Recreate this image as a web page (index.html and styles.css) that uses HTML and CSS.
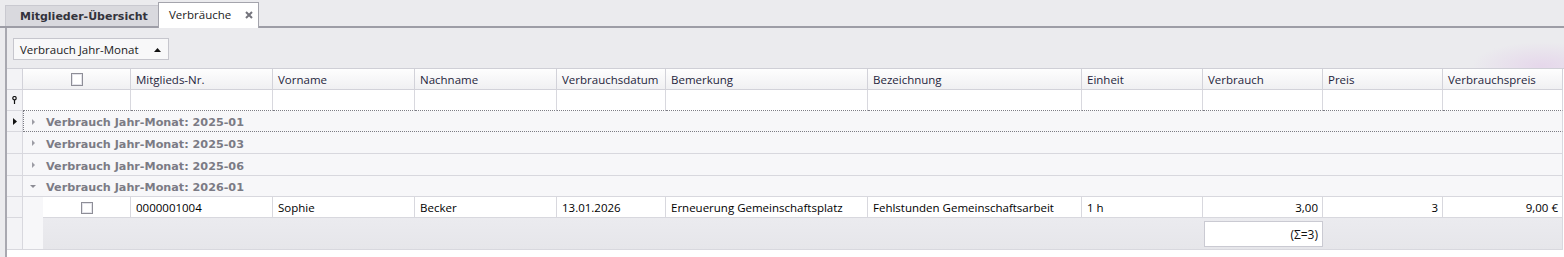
FILE: index.html
```html
<!DOCTYPE html>
<html lang="de">
<head>
  <meta charset="UTF-8" />
  <title>Verbräuche</title>
  <link rel="stylesheet" href="styles.css">
</head>
<body>
  <div class="tabs">
    <div class="tab">Mitglieder-Übersicht</div>
    <div class="tab active">
      Verbräuche
      <svg class="tab-close" width="8" height="8" viewBox="0 0 8 8"><path d="M1 1L7 7M7 1L1 7" stroke="#74747c" stroke-width="2"/></svg>
    </div>
  </div>

  <div class="panel">
    <div class="group-panel">
      <div class="group-btn">
        Verbrauch Jahr-Monat
        <svg width="7" height="4" viewBox="0 0 7 4"><path d="M0 4L3.5 0L7 4Z" fill="#111"/></svg>
      </div>
    </div>

    <div class="grid">
      <div class="row header">
        <div class="cell ind"></div>
        <div class="cell span-check center"><span class="check"></span></div>
        <div class="cell">Mitglieds-Nr.</div>
        <div class="cell">Vorname</div>
        <div class="cell">Nachname</div>
        <div class="cell">Verbrauchsdatum</div>
        <div class="cell">Bemerkung</div>
        <div class="cell">Bezeichnung</div>
        <div class="cell">Einheit</div>
        <div class="cell">Verbrauch</div>
        <div class="cell">Preis</div>
        <div class="cell">Verbrauchspreis</div>
      </div>

      <div class="row filter">
        <div class="cell ind">
          <svg width="5" height="8" viewBox="0 0 5 8"><circle cx="2.5" cy="2.2" r="1.7" fill="none" stroke="#111" stroke-width="1.2"/><path d="M2.5 4V8" stroke="#111" stroke-width="1.2"/></svg>
        </div>
        <div class="cell span-check"></div>
        <div class="cell"></div>
        <div class="cell"></div>
        <div class="cell"></div>
        <div class="cell"></div>
        <div class="cell"></div>
        <div class="cell"></div>
        <div class="cell"></div>
        <div class="cell"></div>
        <div class="cell"></div>
        <div class="cell"></div>
      </div>

      <div class="row group-row">
        <div class="cell ind">
          <svg width="4" height="7" viewBox="0 0 4 7"><path d="M0 0L4 3.5L0 7Z" fill="#111"/></svg>
        </div>
        <div class="cell group focused">
          <svg class="expander" width="3" height="6" viewBox="0 0 3 6"><path d="M0 0L3 3L0 6Z" fill="#9c9ca4"/></svg>
          Verbrauch Jahr-Monat: 2025-01
        </div>
      </div>

      <div class="row group-row tall">
        <div class="cell ind"></div>
        <div class="cell group">
          <svg class="expander" width="3" height="6" viewBox="0 0 3 6"><path d="M0 0L3 3L0 6Z" fill="#9c9ca4"/></svg>
          Verbrauch Jahr-Monat: 2025-03
        </div>
      </div>

      <div class="row group-row tall">
        <div class="cell ind"></div>
        <div class="cell group">
          <svg class="expander" width="3" height="6" viewBox="0 0 3 6"><path d="M0 0L3 3L0 6Z" fill="#9c9ca4"/></svg>
          Verbrauch Jahr-Monat: 2025-06
        </div>
      </div>

      <div class="row group-row">
        <div class="cell ind"></div>
        <div class="cell group">
          <svg class="expander open" width="6" height="3" viewBox="0 0 6 3"><path d="M0 0L6 0L3 3Z" fill="#8c8c94"/></svg>
          Verbrauch Jahr-Monat: 2026-01
        </div>
      </div>

      <div class="row data">
        <div class="cell ind"></div>
        <div class="cell indent"></div>
        <div class="cell center"><span class="check"></span></div>
        <div class="cell">0000001004</div>
        <div class="cell">Sophie</div>
        <div class="cell">Becker</div>
        <div class="cell">13.01.2026</div>
        <div class="cell">Erneuerung Gemeinschaftsplatz</div>
        <div class="cell">Fehlstunden Gemeinschaftsarbeit</div>
        <div class="cell">1 h</div>
        <div class="cell num">3,00</div>
        <div class="cell num">3</div>
        <div class="cell num">9,00 €</div>
      </div>

      <div class="row footer">
        <div class="cell ind"></div>
        <div class="cell indent"></div>
        <div class="cell foot foot-left"></div>
        <div class="cell foot"><div class="summary">(Σ=3)</div></div>
        <div class="cell foot foot-right"></div>
      </div>
    </div>
  </div>
</body>
</html>
```

FILE: styles.css
```css
:root {
  --panel-bg: #ebebee;
  --line: #d8d8de;
  --group-bg: #f7f7f9;
  --ind-bg: #f3f3f6;
  --grid-font: "Open Sans", "Liberation Sans", sans-serif;
  --bold-font: "DejaVu Sans", "Liberation Sans", sans-serif;
}

* {
  margin: 0;
  padding: 0;
  box-sizing: border-box;
}

body {
  width: 1564px;
  height: 257px;
  overflow: hidden;
  background: var(--panel-bg);
  font-family: var(--grid-font);
  font-size: 11.5px;
  color: #000;
}

/* tab strip */
.tabs {
  height: 28px;
  display: flex;
  align-items: flex-end;
  padding-left: 5px;
  border-bottom: 2px solid #9d9da6;
}

.tab {
  height: 21px;
  width: 153px;
  padding: 1px 0 0 14px;
  display: flex;
  align-items: center;
  background: #d9d9de;
  border-top: 1px solid #c9c9d0;
  border-left: 1px solid #c9c9d0;
  font-family: var(--bold-font);
  font-weight: bold;
  font-size: 11px;
  color: #33333c;
}

.tab.active {
  height: 26px;
  width: 101px;
  margin-bottom: -2px;
  padding: 0 0 3px 10px;
  background: #fff;
  border: 1px solid #a4a4ac;
  border-bottom: none;
  font-family: var(--grid-font);
  font-weight: normal;
  font-size: 11.5px;
  color: #222;
}

.tab-close {
  margin-left: 14px;
  margin-top: 1px;
}

/* content panel */
.panel {
  margin-left: 5px;
  height: 229px;
  border-left: 2px solid #a8a8b0;
  background:
    radial-gradient(70px 24px at 1535px 38px, rgba(228, 210, 234, 0.8), rgba(235, 235, 238, 0)),
    var(--panel-bg);
  display: flex;
  flex-direction: column;
}

.group-panel {
  height: 40px;
  padding: 10px 0 0 6px;
}

.group-btn {
  width: 156px;
  height: 22px;
  display: flex;
  align-items: center;
  gap: 16px;
  padding-left: 6px;
  background: #f8f8f9;
  border: 1px solid #c6c6cd;
  font-size: 11.5px;
  color: #222;
}

.group-btn svg {
  margin-top: 1px;
}

/* grid */
.grid {
  flex: 1;
  background: #fff;
  border-top: 1px solid #cfcfd6;
}

.row {
  display: grid;
  grid-template-columns: 16px 20px 88px 142px 142px 142px 109px 202px 214px 121px 120px 120px 120px;
  height: 21px;
}

.row.tall {
  height: 22px;
}

.cell {
  display: flex;
  align-items: center;
  padding: 0 5px;
  white-space: nowrap;
  overflow: hidden;
  border-right: 1px solid var(--line);
  border-bottom: 1px solid var(--line);
}

.cell.center {
  justify-content: center;
  padding: 0;
}

.cell.num {
  justify-content: flex-end;
  padding-right: 4px;
}

.cell.ind {
  padding: 0;
  justify-content: center;
  background: var(--ind-bg);
}

.span-check {
  grid-column: 2 / 4;
}

.header .cell {
  background: linear-gradient(#fefefe, #f0f0f2);
  border-color: #d2d2d9;
  color: #1f1f3c;
}

.header .cell.ind {
  background: var(--ind-bg);
}

.filter .cell:not(.ind) {
  border-bottom: 1px dotted #7c7c84;
}

.check {
  width: 12px;
  height: 13px;
  margin-top: 1px;
  border: 1px solid #8e8e97;
  background: #fff;
  box-shadow: inset 0 0 0 1px #e4e4ea;
}

.data .check {
  height: 12px;
}

/* group rows */
.cell.group {
  grid-column: 2 / -1;
  padding: 3px 0 0 9px;
  gap: 11px;
  background: var(--group-bg);
  font-family: var(--bold-font);
  font-weight: bold;
  font-size: 11.2px;
  color: #7b7b85;
}

.cell.group .expander {
  margin-top: -2px;
}

.cell.group.focused {
  border-left: 1px dotted #7c7c84;
  border-bottom: 1px dotted #7c7c84;
  padding-left: 8px;
}

.cell.group .expander.open {
  margin-left: -2px;
  margin-right: -1px;
}

.cell.indent {
  background: var(--group-bg);
  border-right: none;
  border-bottom-color: var(--group-bg);
}

.footer {
  height: 32px;
}

.footer .cell.indent {
  border-bottom-color: var(--line);
}

.cell.foot {
  background: linear-gradient(#ebebef, #e6e6ea);
  border-right: none;
  align-items: flex-start;
  padding: 3px 0 0 1px;
}

.foot-left {
  grid-column: 3 / 11;
}

.foot-right {
  grid-column: 12 / 14;
  border-right: 1px solid var(--line) !important;
}

.summary {
  width: 119px;
  height: 26px;
  display: flex;
  align-items: center;
  justify-content: flex-end;
  padding-right: 4px;
  background: #fff;
  border: 1px solid #cacad2;
  font-size: 12px;
  color: #111;
}
```
